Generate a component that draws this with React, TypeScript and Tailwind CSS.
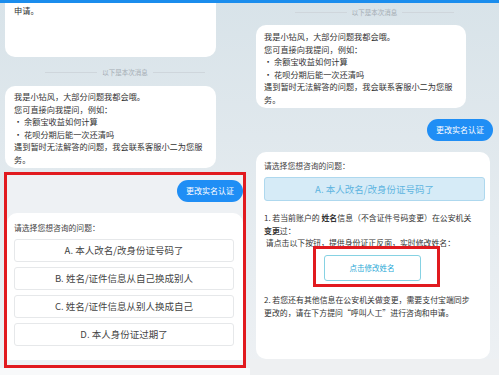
import React from "react";

const font = { fontFamily: '"Noto Sans CJK SC", "Noto Sans", sans-serif' };

function Divider({ lineW }: { lineW: string }) {
  return (
    <div className="flex h-[12px] items-center justify-center gap-[5px]">
      <div className={`h-px ${lineW} bg-[#cfd6dc]`} />
      <span className="text-[6.5px] leading-[12px] text-[#a5adb4]">以下是本次消息</span>
      <div className={`h-px ${lineW} bg-[#cfd6dc]`} />
    </div>
  );
}

function IntroText() {
  return (
    <div className="whitespace-nowrap text-[8.2px] leading-[12.5px] text-[#333]">
      <div>我是小钻风，大部分问题我都会哦。</div>
      <div>您可直接向我提问，例如：</div>
      <div>· 余额宝收益如何计算</div>
      <div>· 花呗分期后能一次还清吗</div>
      <div>遇到暂时无法解答的问题，我会联系客服小二为您服</div>
      <div>务。</div>
    </div>
  );
}

function BlueBubble() {
  return (
    <div className="flex h-[22px] w-[66px] items-center justify-center rounded-[11px] bg-[#1f8ef5] text-[8px] text-white">
      更改实名认证
    </div>
  );
}

const options = [
  "A. 本人改名/改身份证号码了",
  "B. 姓名/证件信息从自己换成别人",
  "C. 姓名/证件信息从别人换成自己",
  "D. 本人身份证过期了",
];

export default function App() {
  return (
    <div style={font} className="flex h-[375px] w-[499px] flex-col overflow-hidden bg-gradient-to-b from-[#d8e3e9] to-[#eef1f4]">
      <div className="h-[3px] w-full shrink-0 bg-[#1b8ded]" />
      <div className="flex flex-1">
        {/* Left column */}
        <div className="flex w-[250px] flex-col">
          <div className="ml-[5px] h-[54px] w-[211px] rounded-b-[10px] bg-white pl-[9px] pt-[1px] text-[8.2px] leading-[12.5px] text-[#333]">
            申请。
          </div>
          <div className="mt-[9px] w-[250px]">
            <Divider lineW="w-[52px]" />
          </div>
          <div className="ml-[5px] mt-[8px] h-[82px] w-[211px] rounded-[10px] bg-white pl-[9px] pt-[4px]">
            <IntroText />
          </div>
          <div className="ml-[4px] mt-[4px] flex h-[196px] w-[242px] flex-col border-[3px] border-[#e11a1f] bg-[#eef1f4]">
            <div className="flex justify-end pt-[5px]">
              <BlueBubble />
            </div>
            <div className="mt-[11px] h-[147px] rounded-t-[10px] bg-white pl-[7px] pr-[9px] pt-[9px]">
              <div className="text-[7.8px] leading-[12px] text-[#444]">请选择您想咨询的问题：</div>
              <div className="mt-[5px] flex flex-col gap-[5px]">
                {options.map((o) => (
                  <div
                    key={o}
                    className="flex h-[23px] items-center justify-center rounded-[3px] border border-[#e6e8ea] bg-white text-[9.5px] text-[#444]"
                  >
                    {o}
                  </div>
                ))}
              </div>
            </div>
          </div>
          <div className="flex-1 bg-[#f8f9fa]" />
        </div>

        {/* Right column */}
        <div className="flex w-[249px] flex-col">
          <div className="mt-[3px]">
            <Divider lineW="w-[52px]" />
          </div>
          <div className="ml-[6px] mt-[7px] h-[83px] w-[210px] rounded-[10px] bg-white pl-[8px] pt-[5px]">
            <IntroText />
          </div>
          <div className="mr-[6px] mt-[11px] flex justify-end">
            <BlueBubble />
          </div>
          <div className="relative ml-[6px] mt-[11px] h-[207px] w-[234px] rounded-[10px] bg-white pl-[8px] pr-[5px] pt-[8px]">
            <div className="text-[7.8px] leading-[12px] text-[#444]">请选择您想咨询的问题：</div>
            <div className="mt-[5px] flex h-[24px] w-[221px] items-center justify-center rounded-[3px] border border-[#aed8ee] bg-[#d6ebf7] text-[9.5px] text-[#5db4e0]">
              A. 本人改名/改身份证号码了
            </div>
            <div className="mt-[11px] whitespace-nowrap text-[7.9px] leading-[12.5px] text-[#333]">
              <div>
                1. 若当前账户的 <b className="font-bold">姓名</b>信息（不含证件号码变更）在公安机关
              </div>
              <div>
                <b className="font-bold">变更</b>过：
              </div>
              <div>&nbsp;请点击以下按钮，提供身份证正反面，实时修改姓名：</div>
            </div>
            <div className="relative mt-[5px] flex h-[26px] justify-center">
              <div className="ml-[-5px] flex h-[26px] w-[97px] items-center justify-center rounded-[3px] border border-[#86d2e3] bg-white text-[7.5px] text-[#29a8d6]">
                点击修改姓名
              </div>
              <div className="absolute left-[49px] top-[-9px] h-[41px] w-[127px] border-[3px] border-[#e11a1f]" />
            </div>
            <div className="mt-[12px] whitespace-nowrap text-[7.9px] leading-[13px] text-[#333]">
              <div>2. 若您还有其他信息在公安机关做变更，需要支付宝端同步</div>
              <div>更改的，请在下方提问“呼叫人工”进行咨询和申请。</div>
            </div>
          </div>
          <div className="flex-1 bg-[#eef0f2]" />
        </div>
      </div>
    </div>
  );
}
